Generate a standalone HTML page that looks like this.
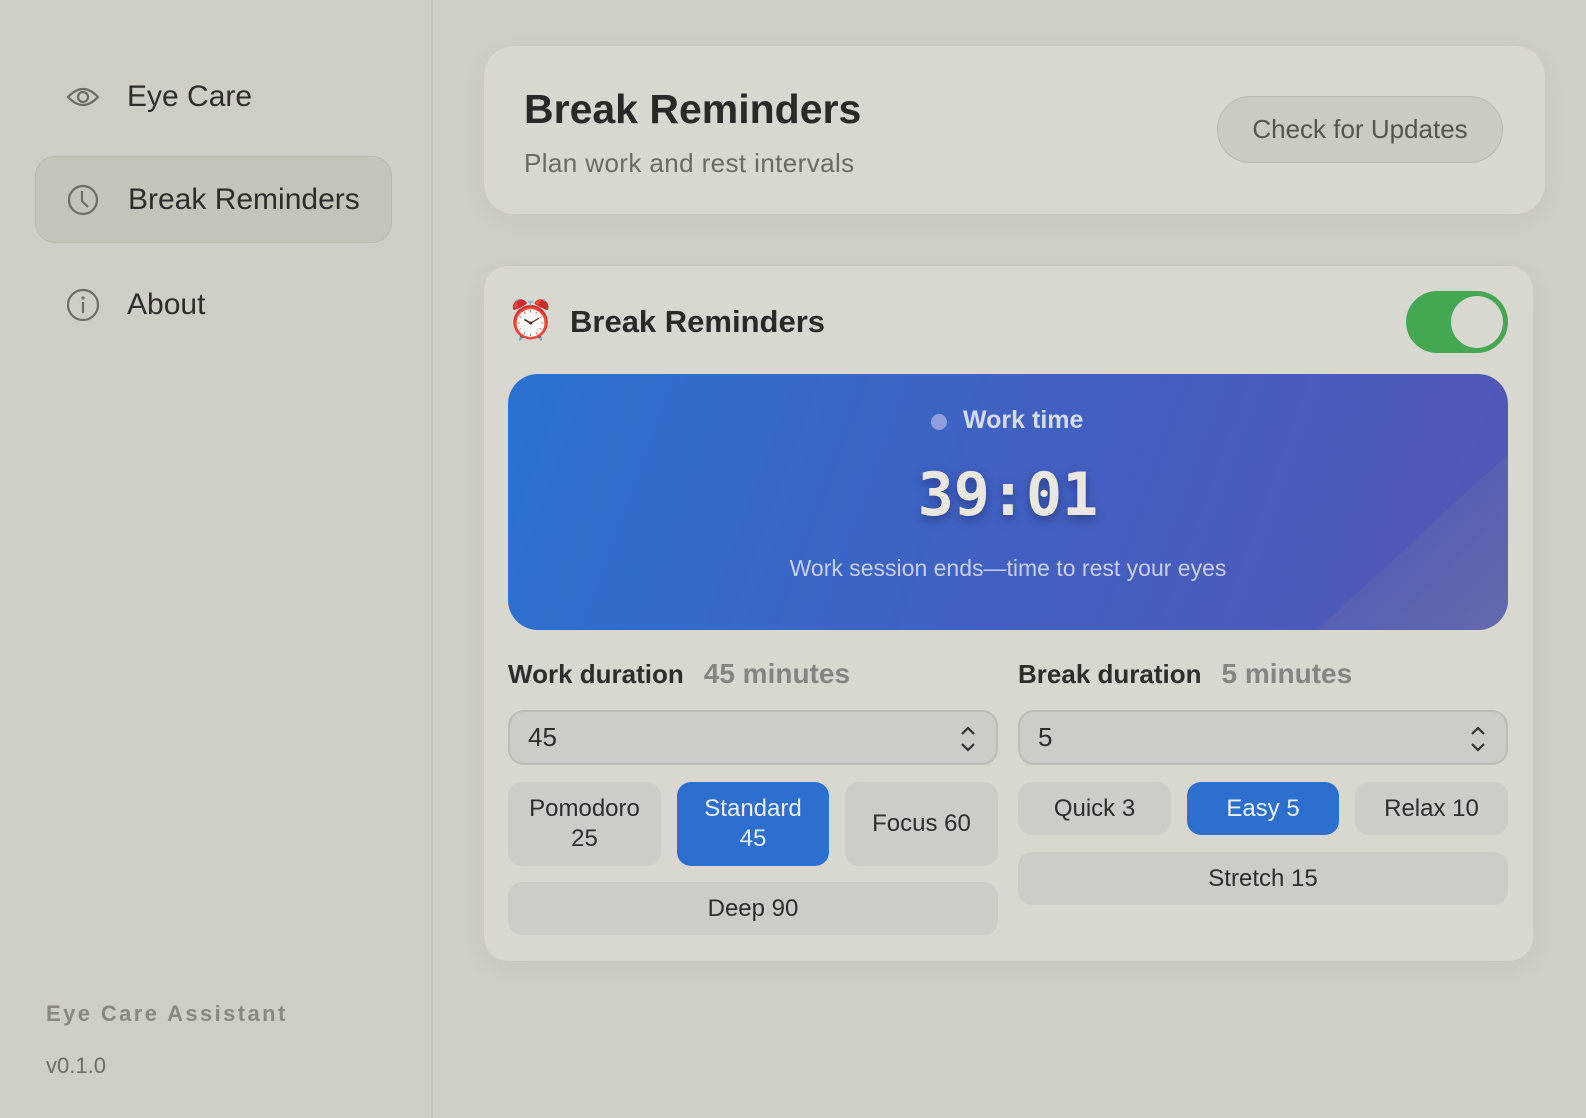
<!DOCTYPE html>
<html><head><meta charset="utf-8"><style>
*{box-sizing:border-box;margin:0;padding:0}
body{width:1586px;height:1118px;overflow:hidden;background:#d2cfc8;font-family:"Liberation Sans","DejaVu Sans",sans-serif;color:#2e2d2a;position:relative}
.abs{position:absolute}
.side{left:0;top:0;width:433px;height:1118px;background:#d0cdc6;border-right:2px solid #c6c3bc}
.nav{position:absolute;left:35px;width:357px;height:87px;display:flex;align-items:center;font-size:30px;color:#2e2d2a}
.nav svg{position:absolute;left:31px}
.nav span{position:absolute;left:92px}
.sel{background:#c6c3bb;border:1px solid #bbb8b0;border-radius:20px}
.card{background:#d8d7d0;border-radius:30px;box-shadow:0 6px 30px rgba(0,0,0,.06)}
.btn{position:absolute;display:flex;align-items:center;justify-content:center;text-align:center;background:#cdccc6;border-radius:14px;font-size:24px;line-height:30px;color:#2e2d2a}
.on{background:#2c6fcf;color:#eef0f5}
.inp{position:absolute;height:55px;border:2px solid #bdbcb6;background:#cdccc6;border-radius:16px;font-size:26px;padding-left:18px;display:flex;align-items:center}
.lbl{position:absolute;font-size:26px;font-weight:bold;color:#2e2d2a}
.lbl b{color:#858480;margin-left:20px;font-size:28px}
</style></head><body>
<div class="abs side"></div>
<div class="nav" style="top:53px">
<svg width="34" height="24" viewBox="0 0 34 24"><path d="M2 12 Q17 -4 32 12 Q17 28 2 12Z" fill="none" stroke="#6e6c67" stroke-width="2.2"/><circle cx="17" cy="12" r="5" fill="none" stroke="#6e6c67" stroke-width="2.2"/></svg><span>Eye Care</span></div>
<div class="nav sel" style="top:156px">
<svg width="32" height="32" viewBox="0 0 32 32"><circle cx="16" cy="16" r="14" fill="none" stroke="#6e6c67" stroke-width="2.2"/><path d="M15 7 V17 L21 23" fill="none" stroke="#6e6c67" stroke-width="2.2"/></svg><span>Break Reminders</span></div>
<div class="nav" style="top:261px">
<svg width="34" height="34" viewBox="0 0 34 34"><circle cx="17" cy="17" r="15" fill="none" stroke="#6e6c67" stroke-width="2.2"/><circle cx="17" cy="10" r="1.6" fill="#6e6c67"/><path d="M17 14 V25" stroke="#6e6c67" stroke-width="2.2"/></svg><span>About</span></div>
<div class="abs" style="left:46px;top:1001px;font-size:22px;font-weight:bold;letter-spacing:2.4px;color:#898781">Eye Care Assistant</div>
<div class="abs" style="left:46px;top:1053px;font-size:22px;color:#6e6c67">v0.1.0</div>

<div class="abs card" style="left:484px;top:46px;width:1061px;height:168px"></div>
<div class="abs" style="left:524px;top:86px;font-size:41px;font-weight:bold;color:#2a2927">Break Reminders</div>
<div class="abs" style="left:524px;top:148px;font-size:26px;letter-spacing:.4px;color:#6b6a65">Plan work and rest intervals</div>
<div class="abs" style="left:1217px;top:96px;width:286px;height:67px;border-radius:34px;background:#cbcac3;border:1.5px solid #b9b8b1;display:flex;align-items:center;justify-content:center;font-size:26px;color:#55544f">Check for Updates</div>

<div class="abs card" style="left:484px;top:266px;width:1049px;height:695px;border-radius:24px"></div>
<div class="abs" style="left:507px;top:299px;font-size:38px;line-height:44px">⏰</div>
<div class="abs" style="left:570px;top:304px;font-size:31px;font-weight:bold;color:#2a2927">Break Reminders</div>
<div class="abs" style="left:1406px;top:291px;width:102px;height:62px;border-radius:31px;background:#44a852"></div>
<div class="abs" style="left:1451px;top:296px;width:52px;height:52px;border-radius:26px;background:#d8d7d0"></div>

<div class="abs" style="left:508px;top:374px;width:1000px;height:256px;border-radius:30px;background:linear-gradient(110deg,#2a72d0 0%,#3f62c3 45%,#5356b5 100%);overflow:hidden">
<div class="abs" style="right:0;bottom:0;width:190px;height:175px;background:linear-gradient(to top left,#6a72a8 0%,#5b63b0 50%,transparent 50.5%);opacity:.7"></div>
</div>
<div class="abs" style="left:931px;top:414px;width:16px;height:16px;border-radius:8px;background:#8f9ee0"></div>
<div class="abs" style="left:963px;top:406px;font-size:25px;font-weight:bold;color:#d6dbef">Work time</div>
<div class="abs" style="left:508px;top:460px;width:1000px;text-align:center;font-family:'DejaVu Sans Mono','Liberation Mono',monospace;font-size:60px;font-weight:bold;color:#e9e7e0;text-shadow:0 4px 10px rgba(0,0,40,.35)">39:01</div>
<div class="abs" style="left:508px;top:555px;width:1000px;text-align:center;font-size:23px;color:#c9cfea">Work session ends—time to rest your eyes</div>

<div class="lbl" style="left:508px;top:658px">Work duration<b>45 minutes</b></div>
<div class="lbl" style="left:1018px;top:658px">Break duration<b>5 minutes</b></div>
<div class="inp" style="left:508px;top:710px;width:490px">45<svg class="abs" style="right:18px;top:12px" width="20" height="30" viewBox="0 0 20 30"><path d="M4 10 L10 4 L16 10 M4 20 L10 26 L16 20" fill="none" stroke="#333" stroke-width="2.2"/></svg></div>
<div class="inp" style="left:1018px;top:710px;width:490px">5<svg class="abs" style="right:18px;top:12px" width="20" height="30" viewBox="0 0 20 30"><path d="M4 10 L10 4 L16 10 M4 20 L10 26 L16 20" fill="none" stroke="#333" stroke-width="2.2"/></svg></div>

<div class="btn" style="left:508px;top:782px;width:153px;height:84px">Pomodoro<br>25</div>
<div class="btn on" style="left:677px;top:782px;width:152px;height:84px">Standard<br>45</div>
<div class="btn" style="left:845px;top:782px;width:153px;height:84px">Focus 60</div>
<div class="btn" style="left:508px;top:882px;width:490px;height:53px">Deep 90</div>

<div class="btn" style="left:1018px;top:782px;width:153px;height:53px">Quick 3</div>
<div class="btn on" style="left:1187px;top:782px;width:152px;height:53px">Easy 5</div>
<div class="btn" style="left:1355px;top:782px;width:153px;height:53px">Relax 10</div>
<div class="btn" style="left:1018px;top:852px;width:490px;height:53px">Stretch 15</div>
</body></html>
